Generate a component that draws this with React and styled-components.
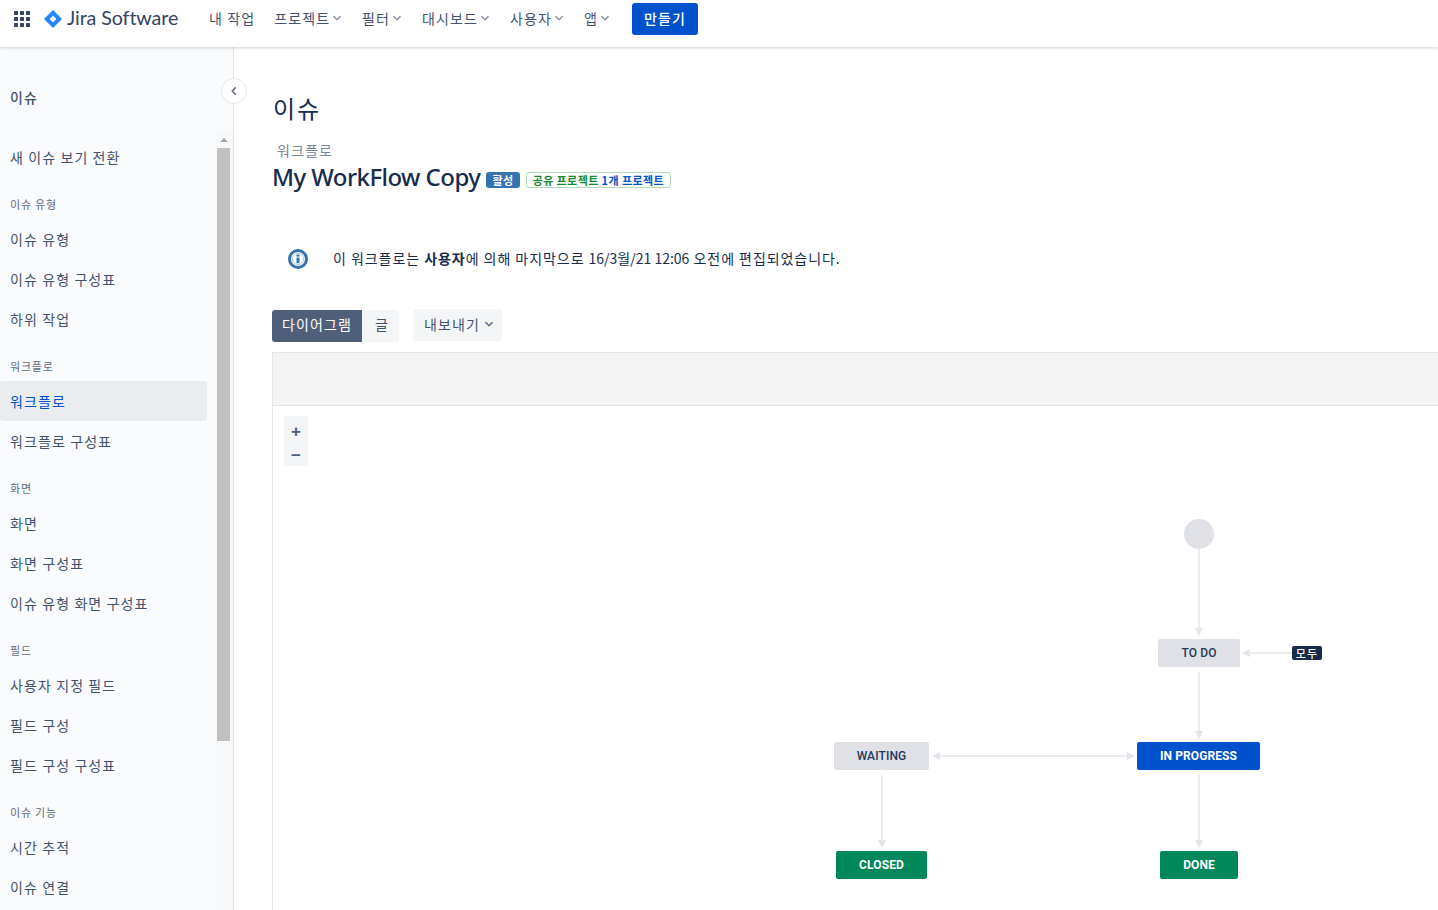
import styled, { createGlobalStyle } from "styled-components";

const GlobalStyle = createGlobalStyle`
    html, body {
        margin: 0;
        height: 100%;
        overflow: hidden;
        background: #fff;
        font-family: "Open Sans", "Noto Sans CJK KR", sans-serif;
    }
    * { box-sizing: border-box; }
`;

const FONT = `"Noto Sans CJK KR", "Open Sans", sans-serif`;

const Page = styled.div`
    height: 910px;
    display: flex;
    flex-direction: column;
    overflow: hidden;
    font-family: ${FONT};
    letter-spacing: 1.1px;
`;

const Header = styled.header`
    height: 47px;
    flex: none;
    display: flex;
    align-items: flex-start;
    padding: 3px 0 0 14px;
    background: #fff;
    box-shadow: 0 1px 3px rgba(9, 30, 66, 0.2);
    position: relative;
    z-index: 2;
`;

const Logo = styled.div`
    display: flex;
    align-items: center;
    height: 32px;
    margin-left: 14px;
    width: 165px;
    gap: 5px;
`;

const LogoText = styled.span`
    font-family: "Lato", sans-serif;
    font-size: 19.7px;
    line-height: 28px;
    margin-bottom: 3px;
    color: #344563;
    letter-spacing: -0.1px;
`;

const Nav = styled.nav`
    display: flex;
    align-items: center;
    height: 32px;
    gap: 18px;
    padding-bottom: 2px;
`;

const NavItem = styled.div`
    display: flex;
    align-items: center;
    font-size: 14px;
    color: #42526e;
    &:first-child {
        margin-right: 1px;
    }
`;

const CreateButton = styled.button`
    height: 32px;
    width: 66px;
    margin-left: 20px;
    padding: 0 0 2px;
    border: 0;
    border-radius: 3px;
    background: #0052cc;
    color: #fff;
    font: 500 14px ${FONT};
    letter-spacing: 1.1px;
`;

const Body = styled.div`
    flex: 1;
    display: flex;
    min-height: 0;
`;

const Sidebar = styled.aside`
    width: 234px;
    flex: none;
    background: #fafbfc;
    border-right: 1px solid #dfe1e6;
    display: flex;
    flex-direction: column;
    position: relative;
`;

const SideTitle = styled.div`
    height: 84px;
    flex: none;
    padding: 39px 0 0 10px;
    font-size: 14px;
    line-height: 22px;
    font-weight: 500;
    color: #42526e;
`;

const Collapse = styled.button`
    position: absolute;
    left: 221px;
    top: 31px;
    width: 26px;
    height: 26px;
    padding: 0;
    border-radius: 50%;
    border: 1px solid #e4e6ea;
    background: #fff;
    display: flex;
    align-items: center;
    justify-content: center;
    z-index: 1;
`;

const ScrollArea = styled.div`
    flex: 1;
    display: flex;
    min-height: 0;
`;

const SideList = styled.div`
    flex: 1;
    padding-top: 6px;
    overflow: hidden;
`;

const SideItem = styled.div`
    height: 40px;
    width: 207px;
    padding: 0 0 1px 10px;
    display: flex;
    align-items: center;
    font-size: 14px;
    border-radius: 3px;
    color: ${(props) => (props.$active ? "#0052cc" : "#42526e")};
    background: ${(props) => (props.$active ? "#ebecf0" : "transparent")};
`;

const SideHeading = styled.div`
    height: 42px;
    padding: 16px 0 0 10px;
    font-size: 11px;
    line-height: 22px;
    letter-spacing: 0.8px;
    color: #5e6c84;
`;

const Scrollbar = styled.div`
    width: 18px;
    flex: none;
    display: flex;
    flex-direction: column;
    background: #f7f8f9;
`;

const ScrollUp = styled.div`
    height: 17px;
    display: flex;
    align-items: center;
    justify-content: center;
    &::before {
        content: "";
        border: 4px solid transparent;
        border-top: 0;
        border-bottom: 4px solid #a3a3a3;
    }
`;

const ScrollThumb = styled.div`
    width: 13px;
    height: 593px;
    margin-left: 2px;
    background: #c1c1c1;
`;

const Main = styled.main`
    flex: 1;
    min-width: 0;
    display: flex;
    flex-direction: column;
    padding-left: 38px;
`;

const PageTitle = styled.h1`
    margin: 42px 0 0 1px;
    font-size: 24px;
    line-height: 38px;
    font-weight: 400;
    letter-spacing: 2px;
    color: #172b4d;
`;

const Crumb = styled.div`
    margin: 13px 0 0 5px;
    font-size: 14px;
    line-height: 20px;
    color: #7a869a;
`;

const TitleRow = styled.div`
    display: flex;
    align-items: center;
    height: 34px;
    margin-top: -1px;
`;

const WorkflowName = styled.h2`
    margin: 0;
    font: 500 24px "Noto Sans", "Open Sans", sans-serif;
    letter-spacing: -0.55px;
    color: #172b4d;
    white-space: nowrap;
`;

const Lozenge = styled.span`
    display: inline-flex;
    align-items: center;
    height: 16px;
    margin-top: 8px;
    padding: 0 6px;
    margin-left: 6px;
    border-radius: 3px;
    font-size: 11px;
    font-weight: 700;
    letter-spacing: 0.5px;
    background: #3572b0;
    color: #fff;
`;

const SharedLozenge = styled(Lozenge)`
    background: #fff;
    border: 1px solid #b2d8b9;
    color: #14892c;
    letter-spacing: 0.4px;
`;

const SharedBlue = styled.span`
    color: #0052cc;
    white-space: pre;
`;

const InfoRow = styled.div`
    display: flex;
    align-items: center;
    height: 24px;
    margin: 53px 0 0 16px;
    gap: 25px;
    font-size: 14px;
    letter-spacing: 0.95px;
    color: #172b4d;
`;

const DateText = styled.span`
    letter-spacing: 0;
`;

const ButtonRow = styled.div`
    display: flex;
    align-items: flex-start;
    margin-top: 40px;
`;

const ToggleButton = styled.button`
    height: 32px;
    padding: 0 0 4px ${(props) => (props.$selected ? 0 : 3)}px;
    width: ${(props) => props.$width}px;
    border: 0;
    border-radius: ${(props) => (props.$selected ? "3px 0 0 3px" : "0 3px 3px 0")};
    background: ${(props) => (props.$selected ? "#505f79" : "#f4f5f7")};
    color: ${(props) => (props.$selected ? "#fff" : "#42526e")};
    font: 14px ${FONT};
    letter-spacing: 1.1px;
`;

const ExportButton = styled.button`
    height: 32px;
    width: 89px;
    margin: -1px 0 0 14px;
    padding: 0 0 2px 5px;
    border: 0;
    border-radius: 3px;
    background: #f4f5f7;
    color: #42526e;
    font: 14px ${FONT};
    letter-spacing: 1.1px;
    display: flex;
    align-items: center;
    justify-content: center;
    gap: 2px;
`;

const Canvas = styled.section`
    flex: 1;
    margin-top: 10px;
    min-height: 0;
    display: flex;
    flex-direction: column;
    border-left: 1px solid #e5e5e5;
`;

const CanvasBar = styled.div`
    height: 54px;
    flex: none;
    background: #f4f4f4;
    border-top: 1px solid #e5e5e5;
    border-bottom: 1px solid #e5e5e5;
`;

const Diagram = styled.div`
    flex: 1;
    position: relative;
    overflow: hidden;
`;

const ZoomControl = styled.div`
    position: absolute;
    left: 11px;
    top: 10px;
    width: 24px;
    height: 50px;
    padding-top: 4px;
    border-radius: 3px;
    background: #f4f5f7;
    font: 700 17px "Liberation Sans", sans-serif;
    letter-spacing: 0;
    color: #505f79;
`;

const ZoomButton = styled.div`
    height: 24px;
    display: flex;
    align-items: center;
    justify-content: center;
`;

const Edges = styled.svg`
    position: absolute;
    left: 0;
    top: 0;
`;

const StartNode = styled.div`
    position: absolute;
    left: 911px;
    top: 113px;
    width: 30px;
    height: 30px;
    border-radius: 50%;
    background: #dfe1e6;
`;

const NODE_COLORS = {
    todo: { bg: "#dfe1e6", fg: "#253858" },
    progress: { bg: "#0052cc", fg: "#fff" },
    done: { bg: "#00875a", fg: "#fff" },
};

const StatusNode = styled.div`
    position: absolute;
    height: 28px;
    display: flex;
    align-items: center;
    justify-content: center;
    border-radius: 2px;
    font: ${(props) => (props.$kind === "todo" ? 500 : 700)} 12px "Roboto", sans-serif;
    letter-spacing: 0.1px;
    background: ${(props) => NODE_COLORS[props.$kind].bg};
    color: ${(props) => NODE_COLORS[props.$kind].fg};
`;

const GlobalTag = styled.div`
    position: absolute;
    left: 1019px;
    top: 240px;
    width: 30px;
    height: 14px;
    border-radius: 2px;
    background: #172b4d;
    color: #fff;
    font-size: 11px;
    font-weight: 500;
    line-height: 14px;
    text-align: center;
`;

const Chevron = ({ size = 16, color = "#97a0af", style }) => (
    <svg width={size} height={size} viewBox="0 0 16 16" style={style} fill="none">
        <path d="M4.5 6.5 8 10l3.5-3.5" stroke={color} strokeWidth="2" strokeLinecap="round" strokeLinejoin="round" />
    </svg>
);

const AppGrid = () => (
    <svg width="16" height="16" viewBox="0 0 16 16" style={{ marginTop: 8, flex: "none" }} fill="#344563">
        {[0, 6, 12].map((y) =>
            [0, 6, 12].map((x) => <rect key={`${x}-${y}`} x={x} y={y} width="4" height="4" rx="0.6" />)
        )}
    </svg>
);

const JiraMark = () => (
    <svg width="18" height="18" viewBox="0 0 18 18" style={{ flex: "none" }}>
        <path d="M9 0 18 9l-9 9-9-9z" fill="#2684ff" />
        <path d="M9 5.6 12.4 9 9 12.4 5.6 9z" fill="#fff" />
    </svg>
);

const InfoIcon = () => (
    <svg width="20" height="20" viewBox="0 0 20 20" style={{ flex: "none", marginTop: 2 }}>
        <circle cx="10" cy="10" r="8.5" fill="#fff" stroke="#3572b0" strokeWidth="3" />
        <circle cx="10" cy="10" r="5.6" fill="none" stroke="#9dbcdc" strokeWidth="0.8" />
        <rect x="8.5" y="8.6" width="3" height="5.6" fill="#3572b0" />
        <rect x="8.5" y="5.6" width="3" height="2" fill="#3572b0" />
    </svg>
);

const navItems = [
    { label: "내 작업" },
    { label: "프로젝트", menu: true },
    { label: "필터", menu: true },
    { label: "대시보드", menu: true },
    { label: "사용자", menu: true },
    { label: "앱", menu: true },
];

const sideGroups = [
    { items: ["새 이슈 보기 전환"] },
    { heading: "이슈 유형", items: ["이슈 유형", "이슈 유형 구성표", "하위 작업"] },
    { heading: "워크플로", items: ["워크플로", "워크플로 구성표"] },
    { heading: "화면", items: ["화면", "화면 구성표", "이슈 유형 화면 구성표"] },
    { heading: "필드", items: ["사용자 지정 필드", "필드 구성", "필드 구성 구성표"] },
    { heading: "이슈 기능", items: ["시간 추적", "이슈 연결"] },
];

const nodes = [
    { label: "TO DO", kind: "todo", x: 885, y: 233, w: 82 },
    { label: "WAITING", kind: "todo", x: 561, y: 336, w: 95 },
    { label: "IN PROGRESS", kind: "progress", x: 864, y: 336, w: 123 },
    { label: "CLOSED", kind: "done", x: 563, y: 445, w: 91 },
    { label: "DONE", kind: "done", x: 887, y: 445, w: 78 },
];

const EDGE = "#e4e5ea";

const Arrow = ({ x, y, dir }) => {
    const shapes = {
        down: `${x - 4},${y - 8} ${x + 4},${y - 8} ${x},${y}`,
        left: `${x + 8},${y - 4} ${x + 8},${y + 4} ${x},${y}`,
        right: `${x - 8},${y - 4} ${x - 8},${y + 4} ${x},${y}`,
    };
    return <polygon points={shapes[dir]} fill={EDGE} />;
};

export default function App() {
    return (
        <Page>
            <GlobalStyle />
            <Header>
                <AppGrid />
                <Logo>
                    <JiraMark />
                    <LogoText>Jira Software</LogoText>
                </Logo>
                <Nav>
                    {navItems.map((item) => (
                        <NavItem key={item.label}>
                            {item.label}
                            {item.menu && <Chevron size={14} />}
                        </NavItem>
                    ))}
                </Nav>
                <CreateButton>만들기</CreateButton>
            </Header>
            <Body>
                <Sidebar>
                    <SideTitle>이슈</SideTitle>
                    <Collapse>
                        <Chevron size={14} color="#6b778c" style={{ transform: "rotate(90deg)" }} />
                    </Collapse>
                    <ScrollArea>
                        <SideList>
                            {sideGroups.map((group) => (
                                <div key={group.items[0]}>
                                    {group.heading && <SideHeading>{group.heading}</SideHeading>}
                                    {group.items.map((item) => (
                                        <SideItem key={item} $active={item === "워크플로"}>{item}</SideItem>
                                    ))}
                                </div>
                            ))}
                        </SideList>
                        <Scrollbar>
                            <ScrollUp />
                            <ScrollThumb />
                        </Scrollbar>
                    </ScrollArea>
                </Sidebar>
                <Main>
                    <PageTitle>이슈</PageTitle>
                    <Crumb>워크플로</Crumb>
                    <TitleRow>
                        <WorkflowName>My WorkFlow Copy</WorkflowName>
                        <Lozenge>활성</Lozenge>
                        <SharedLozenge>공유 프로젝트 <SharedBlue> 1개 프로젝트</SharedBlue></SharedLozenge>
                    </TitleRow>
                    <InfoRow>
                        <InfoIcon />
                        <span>이 워크플로는 <b>사용자</b>에 의해 마지막으로 <DateText>16/3월/21 12:06</DateText> 오전에 편집되었습니다.</span>
                    </InfoRow>
                    <ButtonRow>
                        <ToggleButton $selected $width={90}>다이어그램</ToggleButton>
                        <ToggleButton $width={37}>글</ToggleButton>
                        <ExportButton>내보내기<Chevron size={14} color="#6b778c" /></ExportButton>
                    </ButtonRow>
                    <Canvas>
                        <CanvasBar />
                        <Diagram>
                            <ZoomControl>
                                <ZoomButton>+</ZoomButton>
                                <ZoomButton>−</ZoomButton>
                            </ZoomControl>
                            <Edges width="1165" height="504">
                                <g stroke={EDGE} strokeWidth="1.5" fill="none">
                                    <path d="M926 143V222" />
                                    <path d="M975 247H1019" />
                                    <path d="M926 266V325" />
                                    <path d="M667 350H854" />
                                    <path d="M609 369V434" />
                                    <path d="M926 369V434" />
                                </g>
                                <Arrow x={926} y={230} dir="down" />
                                <Arrow x={969} y={247} dir="left" />
                                <Arrow x={926} y={333} dir="down" />
                                <Arrow x={659} y={350} dir="left" />
                                <Arrow x={862} y={350} dir="right" />
                                <Arrow x={609} y={442} dir="down" />
                                <Arrow x={926} y={442} dir="down" />
                            </Edges>
                            <StartNode />
                            {nodes.map((node) => (
                                <StatusNode
                                    key={node.label}
                                    $kind={node.kind}
                                    style={{ left: node.x, top: node.y, width: node.w }}
                                >
                                    {node.label}
                                </StatusNode>
                            ))}
                            <GlobalTag>모두</GlobalTag>
                        </Diagram>
                    </Canvas>
                </Main>
            </Body>
        </Page>
    );
}
